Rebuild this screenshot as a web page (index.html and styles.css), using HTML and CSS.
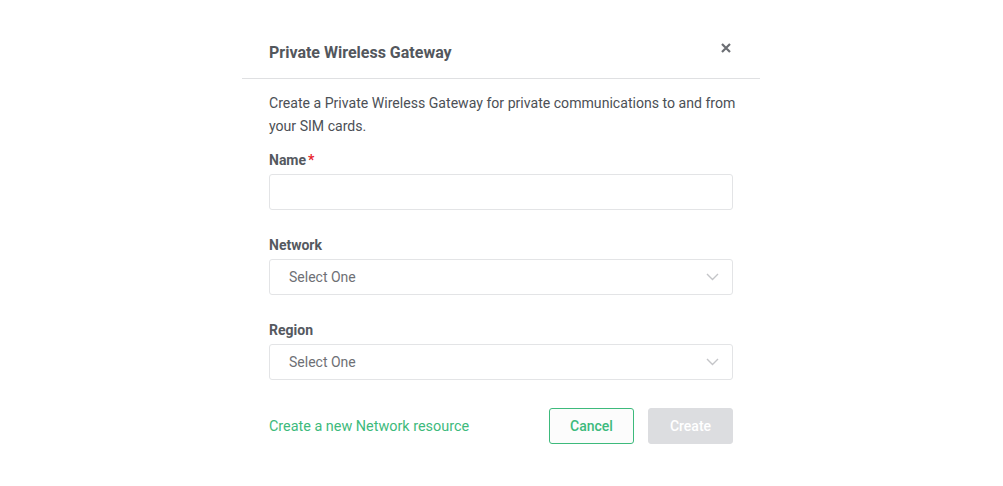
FILE: index.html
```html
<!DOCTYPE html>
<html>
<head>
<meta charset="utf-8">
<link rel="stylesheet" href="styles.css">
</head>
<body>
<div class="page">
  <div class="modal">
    <div class="modal-header">
      <h2 class="modal-title">Private Wireless Gateway</h2>
      <span class="close" aria-label="Close">
        <svg width="10" height="10" viewBox="0 0 10 10"><path d="M1 1L9 9M9 1L1 9" stroke="#6b6e73" stroke-width="2.2" stroke-linecap="butt"/></svg>
      </span>
    </div>
    <div class="modal-body">
      <p class="desc">Create a Private Wireless Gateway for private communications to and from your SIM cards.</p>
      <div class="field">
        <label class="label">Name<span class="req">*</span></label>
        <div class="input"></div>
      </div>
      <div class="field">
        <label class="label">Network</label>
        <div class="input select"><span>Select One</span>
          <svg width="13" height="8" viewBox="0 0 13 8"><path d="M1 1l5.5 5.5L12 1" fill="none" stroke="#c4c5c8" stroke-width="1.4"/></svg>
        </div>
      </div>
      <div class="field">
        <label class="label">Region</label>
        <div class="input select"><span>Select One</span>
          <svg width="13" height="8" viewBox="0 0 13 8"><path d="M1 1l5.5 5.5L12 1" fill="none" stroke="#c4c5c8" stroke-width="1.4"/></svg>
        </div>
      </div>
      <div class="footer">
        <a class="link">Create a new Network resource</a>
        <div class="buttons">
          <button class="btn btn-cancel">Cancel</button>
          <button class="btn btn-create">Create</button>
        </div>
      </div>
    </div>
  </div>
</div>
</body>
</html>
```
FILE: styles.css
```css
* { box-sizing: border-box; }
html, body { margin: 0; background: #fff; }
body { font-family: Roboto, "Liberation Sans", Arial, sans-serif; }
.page {
  display: flex;
  justify-content: center;
  padding: 27px 1px 0 0;
}
.modal {
  width: 518px;
  background: #fff;
}
.modal-header {
  display: flex;
  align-items: flex-start;
  justify-content: space-between;
  padding: 16px 28px 15px 27px;
  border-bottom: 1px solid #dfe0e2;
}
.modal-title {
  margin: 0;
  font-size: 16px;
  line-height: 20px;
  font-weight: 700;
  color: #53575d;
}
.close {
  display: flex;
  margin-top: -1px;
  padding: 1px;
}
.modal-body {
  padding: 13px 27px 0 27px;
}
.desc {
  margin: 0 -24px 11px 0;
  font-size: 14.1px;
  line-height: 23px;
  color: #4c5056;
}
.field { margin-bottom: 24px; }
.label {
  display: block;
  font-size: 14px;
  line-height: 20px;
  font-weight: 700;
  color: #55595f;
  padding-top: 1px;
  margin-bottom: 4px;
}
.req { color: #e8262f; margin-left: 2px; }
.input {
  height: 36px;
  border: 1px solid #e3e4e6;
  border-radius: 3px;
  background: #fff;
}
.select {
  display: flex;
  align-items: center;
  justify-content: space-between;
  padding: 0 13px 0 19px;
  font-size: 14px;
  color: #6e7075;
}
.footer {
  display: flex;
  align-items: center;
  justify-content: space-between;
  margin-top: 28px;
}
.link {
  font-size: 14.4px;
  color: #3dba7c;
  cursor: pointer;
}
.buttons { display: flex; gap: 14px; }
.btn {
  width: 85px;
  height: 36px;
  border-radius: 3px;
  font-family: inherit;
  font-size: 14px;
  font-weight: 500;
  cursor: pointer;
}
.btn-cancel {
  border: 1px solid #3dba7c;
  background: #fcfcfc;
  color: #3dba7c;
}
.btn-create {
  border: 1px solid #dcdde0;
  background: #dcdde0;
  color: #fff;
}
```
